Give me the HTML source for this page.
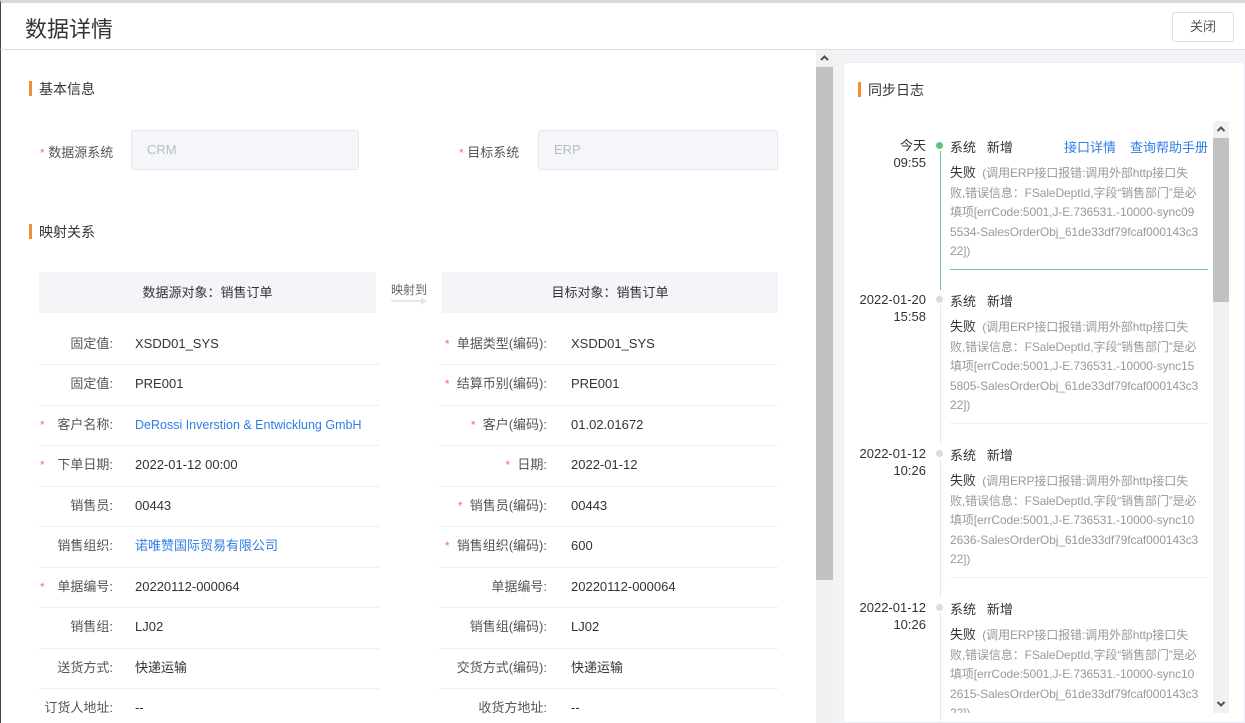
<!DOCTYPE html>
<html><head><meta charset="utf-8"><style>
*{margin:0;padding:0;box-sizing:border-box}
body{width:1245px;height:723px;overflow:hidden;background:#fff;font-family:"Liberation Sans","Noto Sans CJK SC",sans-serif;font-size:13px;color:#333;position:relative}
.a{position:absolute;white-space:nowrap}
.hd{left:0;top:0;width:1245px;height:50px;border-top:3px solid #d8d8d8;border-bottom:1px solid #dcdfe6;border-left:1px solid #444}
.sec{font-size:14px;color:#333}
.bar{width:3px;height:15px;background:#f58d38}
.inp{height:40px;background:#f5f6fa;border:1px solid #e4e7ed;border-radius:3px;color:#b8bcc4;font-size:13px;line-height:38px;padding-left:15px}
.th{height:41px;background:#f4f5f8;text-align:center;line-height:41px;color:#333}
.lbl{text-align:right;color:#555;line-height:16px}
.star{color:#f56c6c;font-size:12px}
.sep{height:1px;background:#ebeef5}
.v{line-height:16px;color:#333}
.blue{color:#2e7ee6}
.t{text-align:right;width:80px;line-height:17px;color:#333}
.err{font-size:12px;color:#999;line-height:19.5px;white-space:nowrap;letter-spacing:-0.1px}
.err b{font-weight:normal;color:#333;font-size:13px}
</style></head><body>
<div class="a hd"></div>
<div class="a" style="left:25px;top:12px;font-size:22px;color:#333">数据详情</div>
<div class="a" style="left:1172px;top:12px;width:62px;height:30px;border:1px solid #dcdfe6;border-radius:3px;text-align:center;line-height:28px;color:#555">关闭</div>
<div class="a" style="left:0;top:50px;width:1px;height:673px;background:#444"></div>

<div class="a" style="left:816px;top:50px;width:17px;height:673px;background:#f1f1f1"></div>
<div class="a" style="left:816px;top:67px;width:17px;height:513px;background:#c1c1c1"></div>
<svg class="a" style="left:816px;top:50px" width="17" height="17"><path d="M5 10 L8.5 6.5 L12 10" fill="none" stroke="#505050" stroke-width="2"/></svg>
<div class="a" style="left:833px;top:50px;width:412px;height:673px;background:#f2f3f5"></div>
<div class="a" style="left:843px;top:62px;width:402px;height:661px;background:#fff;border:1px solid #ebeef5"></div>

<div class="a bar" style="left:29px;top:81px"></div>
<div class="a sec" style="left:39px;top:79px">基本信息</div>
<div class="a" style="left:40px;top:142px;color:#555"><span class="star">*</span> 数据源系统</div>
<div class="a inp" style="left:131px;top:130px;width:228px">CRM</div>
<div class="a" style="left:459px;top:142px;color:#555"><span class="star">*</span> 目标系统</div>
<div class="a inp" style="left:538px;top:130px;width:240px">ERP</div>

<div class="a bar" style="left:29px;top:224px"></div>
<div class="a sec" style="left:39px;top:222px">映射关系</div>
<div class="a th" style="left:39px;top:272px;width:337px">数据源对象：销售订单</div>
<div class="a th" style="left:442px;top:272px;width:336px">目标对象：销售订单</div>
<div class="a" style="left:391px;top:281px;font-size:12px;color:#666">映射到</div>
<div class="a" style="left:391px;top:300px;width:30px;height:2px;background:#e6e6e6"></div>
<div class="a" style="left:421px;top:297px;width:0;height:0;border-left:6px solid #e6e6e6;border-top:4px solid transparent;border-bottom:4px solid transparent"></div>

<div class="a lbl" style="left:0;top:336px;width:113px">固定值:</div><div class="a v" style="left:135px;top:336px">XSDD01_SYS</div>
<div class="a lbl" style="left:400px;top:336px;width:147px"><span class="star">*</span>&nbsp; 单据类型(编码):</div><div class="a v" style="left:571px;top:336px">XSDD01_SYS</div>
<div class="a sep" style="left:39px;top:364px;width:340px"></div><div class="a sep" style="left:439px;top:364px;width:339px"></div>

<div class="a lbl" style="left:0;top:376px;width:113px">固定值:</div><div class="a v" style="left:135px;top:376px">PRE001</div>
<div class="a lbl" style="left:400px;top:376px;width:147px"><span class="star">*</span>&nbsp; 结算币别(编码):</div><div class="a v" style="left:571px;top:376px">PRE001</div>
<div class="a sep" style="left:39px;top:405px;width:340px"></div><div class="a sep" style="left:439px;top:405px;width:339px"></div>

<div class="a star" style="left:40px;top:418px">*</div><div class="a lbl" style="left:0;top:417px;width:113px">客户名称:</div><div class="a v blue" style="left:135px;top:417px;font-size:12.5px">DeRossi Inverstion &amp; Entwicklung GmbH</div>
<div class="a lbl" style="left:400px;top:417px;width:147px"><span class="star">*</span>&nbsp; 客户(编码):</div><div class="a v" style="left:571px;top:417px">01.02.01672</div>
<div class="a sep" style="left:39px;top:445px;width:340px"></div><div class="a sep" style="left:439px;top:445px;width:339px"></div>

<div class="a star" style="left:40px;top:458px">*</div><div class="a lbl" style="left:0;top:457px;width:113px">下单日期:</div><div class="a v" style="left:135px;top:457px">2022-01-12 00:00</div>
<div class="a lbl" style="left:400px;top:457px;width:147px"><span class="star">*</span>&nbsp; 日期:</div><div class="a v" style="left:571px;top:457px">2022-01-12</div>
<div class="a sep" style="left:39px;top:486px;width:340px"></div><div class="a sep" style="left:439px;top:486px;width:339px"></div>

<div class="a lbl" style="left:0;top:498px;width:113px">销售员:</div><div class="a v" style="left:135px;top:498px">00443</div>
<div class="a lbl" style="left:400px;top:498px;width:147px"><span class="star">*</span>&nbsp; 销售员(编码):</div><div class="a v" style="left:571px;top:498px">00443</div>
<div class="a sep" style="left:39px;top:526px;width:340px"></div><div class="a sep" style="left:439px;top:526px;width:339px"></div>

<div class="a lbl" style="left:0;top:538px;width:113px">销售组织:</div><div class="a v blue" style="left:135px;top:538px">诺唯赞国际贸易有限公司</div>
<div class="a lbl" style="left:400px;top:538px;width:147px"><span class="star">*</span>&nbsp; 销售组织(编码):</div><div class="a v" style="left:571px;top:538px">600</div>
<div class="a sep" style="left:39px;top:567px;width:340px"></div><div class="a sep" style="left:439px;top:567px;width:339px"></div>

<div class="a star" style="left:40px;top:580px">*</div><div class="a lbl" style="left:0;top:579px;width:113px">单据编号:</div><div class="a v" style="left:135px;top:579px">20220112-000064</div>
<div class="a lbl" style="left:400px;top:579px;width:147px">单据编号:</div><div class="a v" style="left:571px;top:579px">20220112-000064</div>
<div class="a sep" style="left:39px;top:607px;width:340px"></div><div class="a sep" style="left:439px;top:607px;width:339px"></div>

<div class="a lbl" style="left:0;top:619px;width:113px">销售组:</div><div class="a v" style="left:135px;top:619px">LJ02</div>
<div class="a lbl" style="left:400px;top:619px;width:147px">销售组(编码):</div><div class="a v" style="left:571px;top:619px">LJ02</div>
<div class="a sep" style="left:39px;top:648px;width:340px"></div><div class="a sep" style="left:439px;top:648px;width:339px"></div>

<div class="a lbl" style="left:0;top:660px;width:113px">送货方式:</div><div class="a v" style="left:135px;top:660px">快递运输</div>
<div class="a lbl" style="left:400px;top:660px;width:147px">交货方式(编码):</div><div class="a v" style="left:571px;top:660px">快递运输</div>
<div class="a sep" style="left:39px;top:688px;width:340px"></div><div class="a sep" style="left:439px;top:688px;width:339px"></div>

<div class="a lbl" style="left:0;top:700px;width:113px">订货人地址:</div><div class="a v" style="left:135px;top:700px">--</div>
<div class="a lbl" style="left:400px;top:700px;width:147px">收货方地址:</div><div class="a v" style="left:571px;top:700px">--</div>

<div class="a bar" style="left:858px;top:82px"></div>
<div class="a sec" style="left:868px;top:80px">同步日志</div>
<div class="a" style="left:1213px;top:121px;width:16px;height:592px;background:#f1f1f1"></div>
<div class="a" style="left:1213px;top:138px;width:16px;height:164px;background:#c1c1c1"></div>
<svg class="a" style="left:1213px;top:121px" width="16" height="16"><path d="M4.5 10 L8 6.5 L11.5 10" fill="none" stroke="#505050" stroke-width="2"/></svg>
<svg class="a" style="left:1213px;top:696px" width="16" height="16"><path d="M4.5 6 L8 9.5 L11.5 6" fill="none" stroke="#505050" stroke-width="2"/></svg>

<div class="a" style="left:940px;top:151px;width:1px;height:139px;background:#6cc788"></div>
<div class="a" style="left:940px;top:305px;width:1px;height:139px;background:#e8e8e8"></div>
<div class="a" style="left:940px;top:459px;width:1px;height:139px;background:#e8e8e8"></div>
<div class="a" style="left:940px;top:613px;width:1px;height:110px;background:#e8e8e8"></div>

<div class="a" style="left:0;top:0;width:1245px;height:723px;overflow:hidden">
<div class="a t" style="left:846px;top:137px">今天<br>09:55</div>
<div class="a" style="left:936px;top:142px;width:7px;height:7px;border-radius:50%;background:#5ec47a"></div>
<div class="a" style="left:950px;top:137px">系统&nbsp;&nbsp; 新增</div>
<div class="a" style="left:1064px;top:137px;color:#2e7ee6">接口详情</div>
<div class="a" style="left:1130px;top:137px;color:#2e7ee6">查询帮助手册</div>
<div class="a err" style="left:950px;top:163px"><b>失败</b>&nbsp; (调用ERP接口报错:调用外部http接口失<br>败,错误信息：FSaleDeptId,字段“销售部门”是必<br>填项[errCode:5001,J-E.736531.-10000-sync09<br>5534-SalesOrderObj_61de33df79fcaf000143c3<br>22])</div>
<div class="a" style="left:950px;top:269px;width:258px;height:1px;background:#6cc788"></div>

<div class="a t" style="left:846px;top:291px">2022-01-20<br>15:58</div>
<div class="a" style="left:936px;top:296px;width:7px;height:7px;border-radius:50%;background:#dcdcdc"></div>
<div class="a" style="left:950px;top:291px">系统&nbsp;&nbsp; 新增</div>
<div class="a err" style="left:950px;top:317px"><b>失败</b>&nbsp; (调用ERP接口报错:调用外部http接口失<br>败,错误信息：FSaleDeptId,字段“销售部门”是必<br>填项[errCode:5001,J-E.736531.-10000-sync15<br>5805-SalesOrderObj_61de33df79fcaf000143c3<br>22])</div>
<div class="a" style="left:950px;top:423px;width:258px;height:1px;background:#ebeef5"></div>

<div class="a t" style="left:846px;top:445px">2022-01-12<br>10:26</div>
<div class="a" style="left:936px;top:450px;width:7px;height:7px;border-radius:50%;background:#dcdcdc"></div>
<div class="a" style="left:950px;top:445px">系统&nbsp;&nbsp; 新增</div>
<div class="a err" style="left:950px;top:471px"><b>失败</b>&nbsp; (调用ERP接口报错:调用外部http接口失<br>败,错误信息：FSaleDeptId,字段“销售部门”是必<br>填项[errCode:5001,J-E.736531.-10000-sync10<br>2636-SalesOrderObj_61de33df79fcaf000143c3<br>22])</div>
<div class="a" style="left:950px;top:577px;width:258px;height:1px;background:#ebeef5"></div>

<div class="a t" style="left:846px;top:599px">2022-01-12<br>10:26</div>
<div class="a" style="left:936px;top:604px;width:7px;height:7px;border-radius:50%;background:#dcdcdc"></div>
<div class="a" style="left:950px;top:599px">系统&nbsp;&nbsp; 新增</div>
<div class="a" style="left:950px;top:625px;height:88px;overflow:hidden"><div class="err"><b>失败</b>&nbsp; (调用ERP接口报错:调用外部http接口失<br>败,错误信息：FSaleDeptId,字段“销售部门”是必<br>填项[errCode:5001,J-E.736531.-10000-sync10<br>2615-SalesOrderObj_61de33df79fcaf000143c3<br>22])</div></div>
</div>
</body></html>
